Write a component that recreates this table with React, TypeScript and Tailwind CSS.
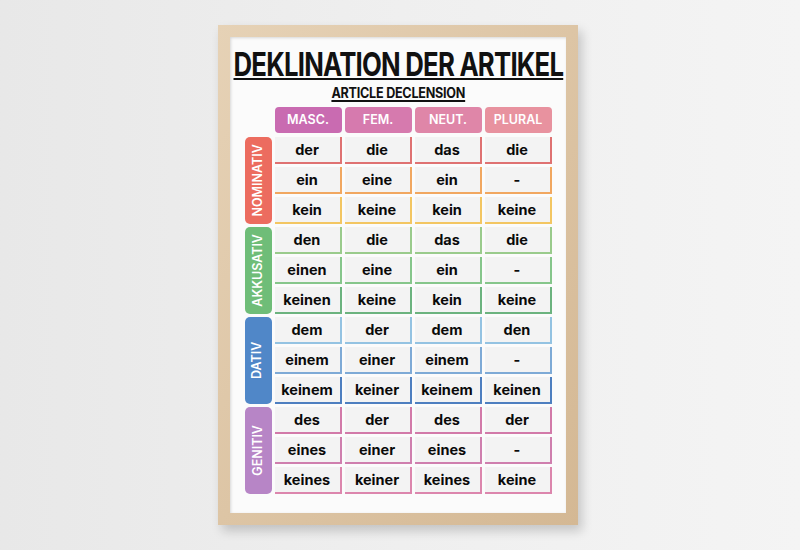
const HEADERS = [
  { label: 'MASC.', color: 'bg-[#c96bb1]' },
  { label: 'FEM.', color: 'bg-[#d67aae]' },
  { label: 'NEUT.', color: 'bg-[#df86a8]' },
  { label: 'PLURAL', color: 'bg-[#e8929f]' },
]

const GROUPS = [
  {
    label: 'NOMINATIV',
    color: 'bg-[#ec6c5f]',
    rows: [
      { words: ['der', 'die', 'das', 'die'], line: 'border-[#df7272]' },
      { words: ['ein', 'eine', 'ein', '-'], line: 'border-[#f1a760]' },
      { words: ['kein', 'keine', 'kein', 'keine'], line: 'border-[#f3c662]' },
    ],
  },
  {
    label: 'AKKUSATIV',
    color: 'bg-[#6fbd78]',
    rows: [
      { words: ['den', 'die', 'das', 'die'], line: 'border-[#9acb8c]' },
      { words: ['einen', 'eine', 'ein', '-'], line: 'border-[#86c68b]' },
      { words: ['keinen', 'keine', 'kein', 'keine'], line: 'border-[#6cb37f]' },
    ],
  },
  {
    label: 'DATIV',
    color: 'bg-[#5087c8]',
    rows: [
      { words: ['dem', 'der', 'dem', 'den'], line: 'border-[#94c3e2]' },
      { words: ['einem', 'einer', 'einem', '-'], line: 'border-[#7eaad6]' },
      { words: ['keinem', 'keiner', 'keinem', 'keinen'], line: 'border-[#4e7fc0]' },
    ],
  },
  {
    label: 'GENITIV',
    color: 'bg-[#b785c6]',
    rows: [
      { words: ['des', 'der', 'des', 'der'], line: 'border-[#d27aa9]' },
      { words: ['eines', 'einer', 'eines', '-'], line: 'border-[#cf7fae]' },
      { words: ['keines', 'keiner', 'keines', 'keine'], line: 'border-[#dc86ad]' },
    ],
  },
]

export default function App() {
  return (
    <div
      className="flex h-[550px] w-[800px] justify-center overflow-hidden bg-linear-to-r from-[#e8e8e8] via-[#efefef] to-[#f4f4f4] pt-[25px] pr-[4px]"
      style={{ fontFamily: 'Inter, "Open Sans", sans-serif' }}
    >
      <div className="h-[500px] w-[360px] bg-linear-to-br from-[#e6d2b6] to-[#d4b894] p-[12px] shadow-[4px_6px_10px_rgba(0,0,0,0.18)]">
        <div className="flex h-full w-full flex-col items-center bg-[#fbfbfb] shadow-[inset_1px_1px_3px_rgba(0,0,0,0.15)]">
          <h1 className="mt-[11px] scale-x-[0.78] text-[33px] leading-none font-bold tracking-[-0.03em] whitespace-nowrap text-[#111] underline decoration-[2px] underline-offset-[2px]">
            DEKLINATION DER ARTIKEL
          </h1>
          <h2 className="mt-[5px] scale-x-[0.9] text-[14px] leading-none font-bold tracking-[-0.02em] whitespace-nowrap text-[#111] underline decoration-[1.5px] underline-offset-[2px]">
            ARTICLE DECLENSION
          </h2>

          <div className="mt-[7px] flex flex-col">
            <div className="ml-[30px] grid grid-cols-[repeat(4,67px)] gap-x-[3px]">
              {HEADERS.map((h) => (
                <div
                  key={h.label}
                  className={`flex h-[26px] items-center justify-center rounded-[4px] text-[12.5px] font-semibold text-white ${h.color}`}
                >
                  {h.label}
                </div>
              ))}
            </div>

            <div className="mt-[4px] flex flex-col gap-y-[3px]">
              {GROUPS.map((g) => (
                <div key={g.label} className="flex gap-x-[3px]">
                  <div className={`flex h-[87px] w-[27px] items-center justify-center rounded-[5px] ${g.color}`}>
                    <span className="-rotate-90 text-[12.5px] font-semibold whitespace-nowrap text-white">
                      {g.label}
                    </span>
                  </div>
                  <div className="grid grid-cols-[repeat(4,67px)] gap-[3px]">
                    {g.rows.map((r) =>
                      r.words.map((w, i) => (
                        <div
                          key={`${r.words[0]}-${i}`}
                          className={`flex h-[27px] items-center justify-center border-r-2 border-b-2 bg-[#f3f3f3] text-[14.5px] font-bold text-[#0a0a0a] ${r.line}`}
                        >
                          {w}
                        </div>
                      )),
                    )}
                  </div>
                </div>
              ))}
            </div>
          </div>
        </div>
      </div>
    </div>
  )
}
